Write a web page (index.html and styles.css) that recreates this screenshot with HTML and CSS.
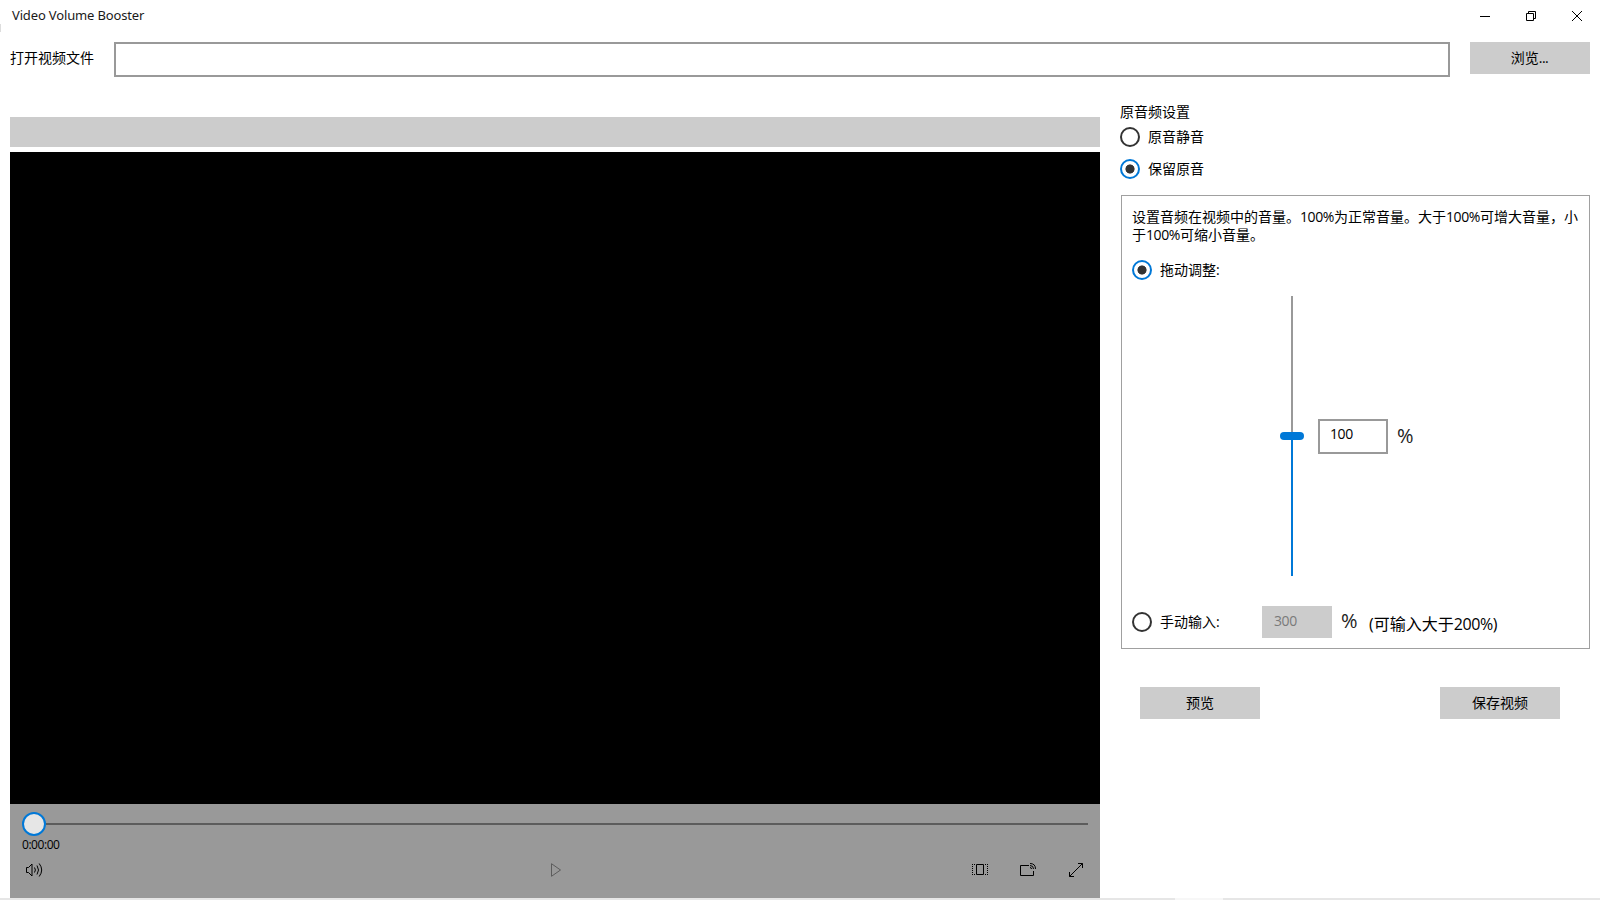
FILE: index.html
```html
<!DOCTYPE html>
<html lang="zh-CN">
<head>
<meta charset="utf-8">
<title>Video Volume Booster</title>
<link rel="stylesheet" href="styles.css">
</head>
<body>
<div class="window">
  <header class="titlebar">
    <span class="title">Video Volume Booster</span>
    <div class="winbtns">
      <svg class="winicon" viewBox="0 0 46 32"><path d="M18 16.500h10"/></svg>
      <svg class="winicon" viewBox="0 0 46 32"><path d="M18.500 13.500h7v7h-7zM20.500 13v-1.500h7v7H26"/></svg>
      <svg class="winicon" viewBox="0 0 46 32"><path d="M18 11l10 10M28 11l-10 10"/></svg>
    </div>
  </header>
  <div class="filerow">
    <span class="filelabel">打开视频文件</span>
    <div class="filebox"></div>
    <button class="btn">浏览<span class="dots">...</span></button>
  </div>
  <main class="content">
    <section class="player">
      <div class="namebar"></div>
      <div class="screen"></div>
      <div class="controls">
        <div class="seek"><div class="seekthumb"></div><div class="seektrack"></div></div>
        <div class="time">0:00:00</div>
        <div class="buttons">
          <svg class="icon" viewBox="0 0 24 24"><path d="M4.500 9.500h2l3.500-3.500v12l-3.500-3.500h-2zM12.500 9.500q1.800 2.500 0 5M15 7.500q3 4.500 0 9M17.200 5.500q5 6.500 0 13"/></svg>
          <svg class="icon play" viewBox="0 0 24 24"><path d="M7.500 5.700v12.600l9-6.300z"/></svg>
          <div class="rightbuttons">
            <svg class="icon" viewBox="0 0 24 24"><path d="M8.500 6.500h7v10h-7z"/><path stroke-dasharray="1 1" d="M4 6.500h4M4.500 8v8M4 16.500h4M17 6.500h3M19.500 8v8M17 16.500h3"/></svg>
            <svg class="icon" viewBox="0 0 24 24"><path d="M13 7.500H4.500v10h13V13"/><path d="M14 5.500q5.500 0 5.500 5.500M14 7.500q3.500 0 3.500 3.500M14 9.500q1.500 0 1.500 1.500"/></svg>
            <svg class="icon" viewBox="0 0 24 24"><path d="M5.500 18.500l13-13M14 5.500h4.500v4.500M5.500 14v4.500h4.500"/></svg>
          </div>
        </div>
      </div>
    </section>
    <aside class="settings">
      <div class="heading">原音频设置</div>
      <label class="option"><i class="radio"></i>原音静音</label>
      <label class="option second"><i class="radio on"></i>保留原音</label>
      <div class="panel">
        <p class="hint">设置音频在视频中的音量。<span class="num">100%</span>为正常音量。大于<span class="num">100%</span>可增大音量，小<br>于<span class="num">100%</span>可缩小音量。</p>
        <label class="option"><i class="radio on"></i>拖动调整:</label>
        <div class="volume">
          <div class="slider"><div class="rest"></div><div class="knob"></div><div class="level"></div></div>
          <div class="numbox">100</div>
          <span class="pct">%</span>
        </div>
        <div class="manual">
          <label class="option"><i class="radio"></i>手动输入:</label>
          <div class="numbox disabled">300</div>
          <span class="pct">%</span>
          <span class="note">(可输入大于<span class="num">200%</span>)</span>
        </div>
      </div>
      <div class="actions">
        <button class="btn">预览</button>
        <button class="btn">保存视频</button>
      </div>
    </aside>
  </main>
  <div class="edge"><div class="edgelight"></div></div>
</div>
</body>
</html>
```
FILE: styles.css
```css
* { box-sizing: border-box; }
body {
  margin: 0;
  background: #fff;
  color: #000;
  font: 14px/18px "Open Sans", "Noto Sans CJK SC", sans-serif;
  white-space: nowrap;
}
.window { width: 1600px; height: 900px; display: flex; flex-direction: column; overflow: hidden; }
.titlebar {
  height: 32px; flex: none; display: flex; justify-content: space-between; padding-left: 12px;
  background: linear-gradient(#ddd, #ddd) 0 24px / 1px 8px no-repeat;
}
.title { font: 13px/31px "Noto Sans", sans-serif; letter-spacing: -0.15px; color: #1a1a1a; }
.winbtns { display: flex; }
.winicon { width: 46px; height: 32px; fill: none; stroke: #000; stroke-width: 1; }
.filerow { height: 45px; flex: none; display: flex; align-items: flex-start; padding: 10px 10px 0; }
.filelabel { width: 104px; padding-top: 7px; }
.filebox { flex: 1; height: 35px; border: 2px solid #999; margin-right: 20px; }
.btn {
  width: 120px; height: 32px; padding: 0; border: 0;
  background: #ccc; color: #000; font: inherit;
}
.dots { letter-spacing: -0.5px; margin-right: 1px; }
.content { height: 821px; flex: none; display: flex; }
.player { width: 1090px; margin-left: 10px; padding-top: 40px; display: flex; flex-direction: column; }
.namebar { height: 30px; background: #ccc; margin-bottom: 5px; }
.screen { height: 652px; background: #000; }
.controls { height: 94px; padding: 8px 12px 0; background: #999; }
.seek { display: flex; align-items: center; height: 24px; }
.seekthumb { width: 24px; height: 24px; border: 2px solid #0078d7; border-radius: 50%; background: #e6e6e6; }
.seektrack { flex: 1; height: 2px; background: #5c5c5c; }
.time { font-size: 12px; line-height: 15px; height: 16px; padding-top: 1px; letter-spacing: -0.45px; }
.buttons { display: flex; align-items: center; justify-content: space-between; height: 36px; }
.icon { width: 24px; height: 24px; fill: none; stroke: #000; stroke-width: 1; display: block; }
.play { stroke: #5c5c5c; margin-left: 98px; }
.rightbuttons { display: flex; gap: 24px; }
.settings { width: 490px; padding: 26px 0 0 20px; display: flex; flex-direction: column; }
.heading { height: 24px; line-height: 18px; }
.option { display: flex; align-items: center; gap: 8px; height: 20px; }
.second { margin-top: 12px; }
.radio { width: 20px; height: 20px; border: 2px solid #333; border-radius: 50%; }
.radio.on { border-color: #0078d7; background: radial-gradient(circle, #333 4.2px, transparent 4.9px); }
.panel { width: 469px; height: 454px; border: 1px solid #a0a0a0; margin: 16px 0 0 1px; padding: 12px 10px 0; }
.hint { margin: 0 0 16px; }
.num { letter-spacing: -0.4px; }
.volume { display: flex; align-items: center; height: 280px; margin: 16px 0 0 148px; }
.slider { width: 24px; height: 280px; display: flex; flex-direction: column; align-items: center; }
.rest { width: 2px; height: 136px; background: #999; }
.knob { width: 24px; height: 8px; border-radius: 4px; background: #0078d7; }
.level { width: 2px; height: 136px; background: #0078d7; }
.numbox {
  width: 70px; height: 35px; border: 2px solid #999; padding-left: 10px; margin-left: 14px;
  line-height: 25px; letter-spacing: -0.4px;
}
.numbox.disabled { height: 32px; border-color: #ccc; background: #ccc; color: #7a7a7a; margin-left: 0; }
.pct { width: 28px; padding-left: 9px; font-size: 20px; line-height: 24px; color: #222; }
.manual { display: flex; align-items: center; height: 32px; margin-top: 30px; }
.manual .option { width: 130px; }
.manual .pct { width: 37px; margin-top: -3px; }
.note { font-size: 16px; margin-top: 3px; }
.actions { display: flex; justify-content: space-between; width: 460px; padding: 38px 20px 0; }
.edge { height: 2px; flex: none; background: #e6e6e6; padding-left: 1175px; }
.edgelight { width: 48px; height: 2px; background: #f7f7f7; }
```
